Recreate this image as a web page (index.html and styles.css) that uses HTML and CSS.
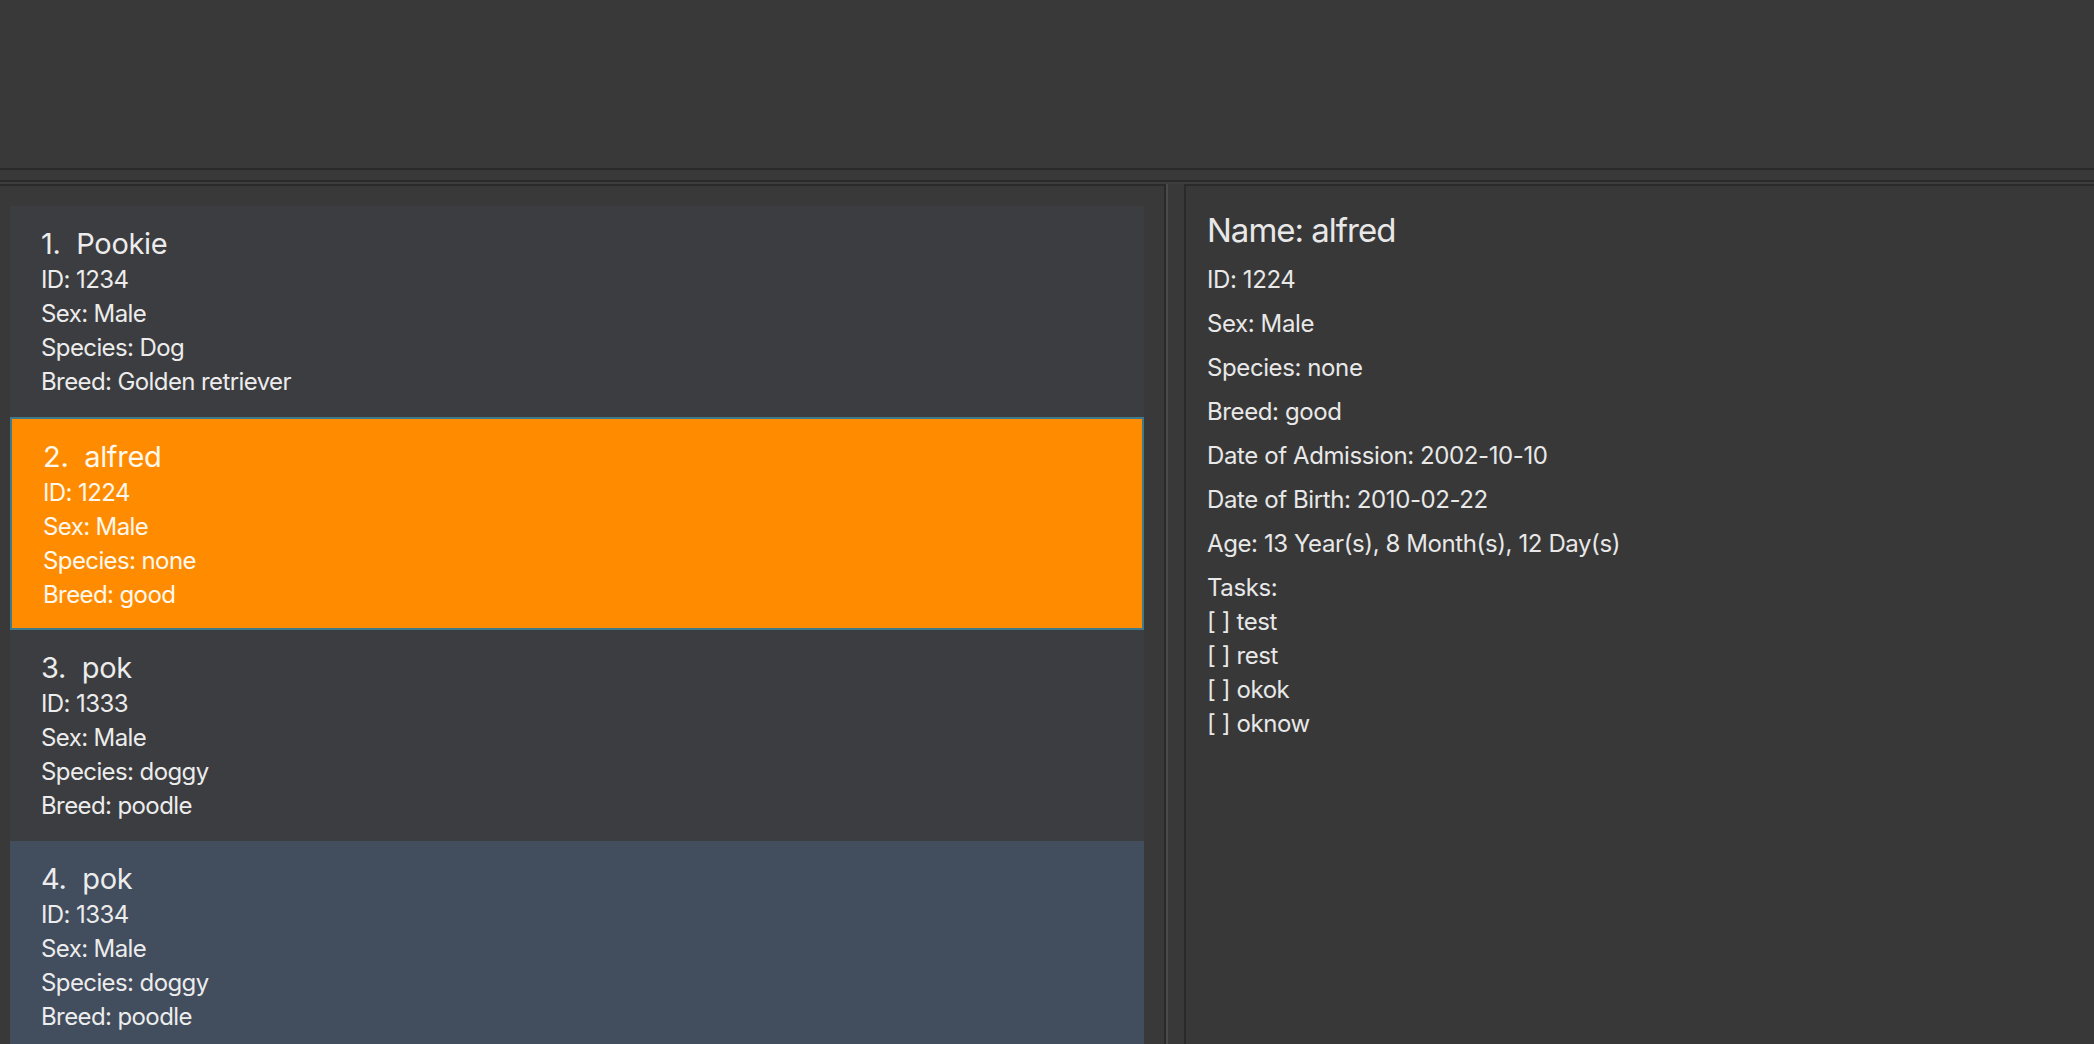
FILE: index.html
```html
<!DOCTYPE html>
<html>
<head>
<meta charset="utf-8">
<link rel="stylesheet" href="styles.css">
</head>
<body>
<div class="app">
  <div class="topbar"></div>
  <div class="rule rule-a"></div>
  <div class="gap"></div>
  <div class="rule rule-a"></div>
  <div class="rule rule-b"></div>
  <div class="main">
    <div class="list-panel">
      <div class="card">
        <div class="name">1.&nbsp;&nbsp;Pookie</div>
        <div class="line">ID: 1234</div>
        <div class="line">Sex: Male</div>
        <div class="line">Species: Dog</div>
        <div class="line">Breed: Golden retriever</div>
      </div>
      <div class="card selected">
        <div class="name">2.&nbsp;&nbsp;alfred</div>
        <div class="line">ID: 1224</div>
        <div class="line">Sex: Male</div>
        <div class="line">Species: none</div>
        <div class="line">Breed: good</div>
      </div>
      <div class="card">
        <div class="name">3.&nbsp;&nbsp;pok</div>
        <div class="line">ID: 1333</div>
        <div class="line">Sex: Male</div>
        <div class="line">Species: doggy</div>
        <div class="line">Breed: poodle</div>
      </div>
      <div class="card hovered">
        <div class="name">4.&nbsp;&nbsp;pok</div>
        <div class="line">ID: 1334</div>
        <div class="line">Sex: Male</div>
        <div class="line">Species: doggy</div>
        <div class="line">Breed: poodle</div>
      </div>
    </div>
    <div class="divider"></div>
    <div class="detail-panel">
      <div class="d-name">Name: alfred</div>
      <div class="d-line">ID: 1224</div>
      <div class="d-line">Sex: Male</div>
      <div class="d-line">Species: none</div>
      <div class="d-line">Breed: good</div>
      <div class="d-line">Date of Admission: 2002-10-10</div>
      <div class="d-line">Date of Birth: 2010-02-22</div>
      <div class="d-line">Age: 13 Year(s), 8 Month(s), 12 Day(s)</div>
      <div class="tasks">
        <div class="t-line">Tasks:</div>
        <div class="t-line">[ ] test</div>
        <div class="t-line">[ ] rest</div>
        <div class="t-line">[ ] okok</div>
        <div class="t-line">[ ] oknow</div>
      </div>
    </div>
  </div>
</div>
</body>
</html>
```

FILE: styles.css
```css
* { box-sizing: border-box; }
html, body {
  margin: 0;
  padding: 0;
  background: #383838;
  overflow: hidden;
}
.app {
  width: 2094px;
  height: 1044px;
  display: flex;
  flex-direction: column;
  font-family: "Inter", "Noto Sans", sans-serif;
  color: #e8e8e8;
}
.topbar {
  height: 168px;
  background: #393939;
}
.rule { height: 2px; flex: none; }
.rule-a { background: #2a2a2a; }
.rule-b { background: #3e3e3e; }
.gap { height: 10px; background: #393939; flex: none; }
.main {
  flex: 1;
  display: flex;
  min-height: 0;
}
.list-panel {
  width: 1166px;
  flex: none;
  border-top: 2px solid #2a2a2a;
  border-right: 2px solid #2a2a2a;
  background: #393939;
  padding: 20px 20px 0 10px;
  overflow: hidden;
}
.card {
  height: 211px;
  background: #3c3d40;
  padding: 21px 0 0 31px;
  color: #ececec;
}
.card.selected {
  height: 213px;
  background: #ff8c00;
  border: 2px solid #3e7a8a;
  padding: 21px 0 0 31px;
  color: #fff8ee;
}
.card.hovered {
  background: #424d5e;
}
.name {
  font-size: 29px;
  line-height: 34px;
  margin-bottom: 2px;
  letter-spacing: -0.3px;
}
.line {
  font-size: 24px;
  line-height: 34px;
  letter-spacing: -0.6px;
}
.divider {
  width: 18px;
  flex: none;
  border-left: 2px solid #4a4a4a;
  background: #393939;
}
.detail-panel {
  flex: 1;
  border-top: 2px solid #2a2a2a;
  border-left: 2px solid #2a2a2a;
  background: #383838;
  padding: 22px 0 0 21px;
}
.d-name {
  font-size: 33px;
  line-height: 44px;
  margin-bottom: 6px;
  letter-spacing: -1px;
}
.d-line {
  font-size: 24px;
  line-height: 44px;
  letter-spacing: -0.4px;
}
.tasks {
  margin-top: 5px;
}
.t-line {
  font-size: 24px;
  line-height: 34px;
  letter-spacing: -0.4px;
}
```
